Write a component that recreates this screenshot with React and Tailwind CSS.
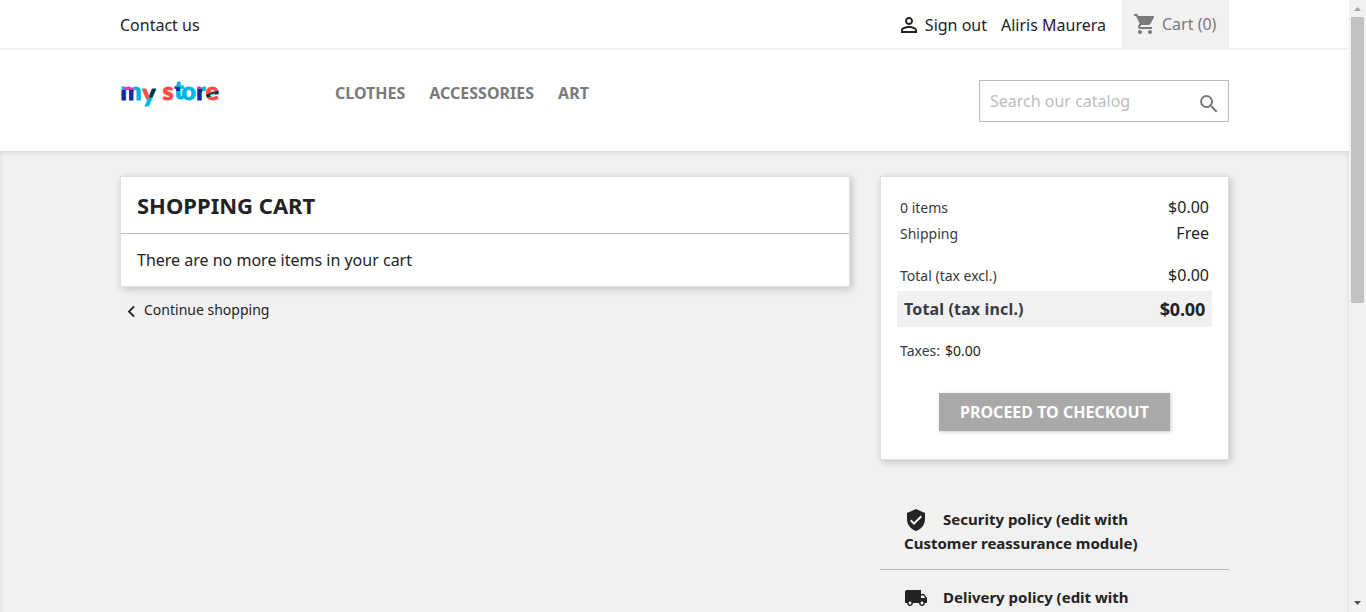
import React from "react";
import {
  MdPersonOutline,
  MdShoppingCart,
  MdSearch,
  MdChevronLeft,
  MdVerifiedUser,
  MdLocalShipping,
} from "react-icons/md";

const cardClass =
  "border border-[#dfdfdf] bg-white shadow-[2px_2px_8px_0_rgba(0,0,0,0.2)]";

function Logo() {
  return (
    <svg width="104" height="40" viewBox="0 0 104 40" className="block overflow-visible" role="img" aria-label="my store">
      <defs>
        <pattern id="ink" patternUnits="userSpaceOnUse" width="104" height="40">
          <rect width="104" height="40" fill="#00b5e2" />
          <rect x="1" y="16" width="6" height="12" fill="#0a2896" />
          <rect x="9" y="16" width="5.5" height="12" fill="#0a2896" />
          <rect x="4" y="11" width="9" height="5" fill="#dd35b5" />
          <rect x="22.6" y="8" width="6.9" height="16.5" fill="#ff4a47" />
          <rect x="29.5" y="8" width="6.5" height="15.5" fill="#05313e" />
          <rect x="40" width="14.5" height="40" fill="#ff4a47" />
          <rect x="55" y="13" width="5" height="4" fill="#0a2896" />
          <rect x="77" y="15" width="5.2" height="14" fill="#0a2896" />
          <rect x="77" y="11" width="4.5" height="4" fill="#dd35b5" />
          <rect x="86" width="18" height="40" fill="#ff4a47" />
          <path d="M86 20.5 L100 16 L100 19.5 L86 24 Z" fill="#05313e" />
          <path d="M90 21 L95 19 L95 21 L90 23 Z" fill="#00b5e2" />
        </pattern>
      </defs>
      <text
        x="0.6 22.2 35 42.4 54.2 61.6 76.2 85.6"
        y="25.8 27.6 26.2 26.2 25 26.4 26.4 26.4"
        fill="url(#ink)"
        stroke="url(#ink)"
        strokeWidth="0.9"
        strokeLinejoin="round"
        className="font-['Lato',sans-serif] text-[25px] font-black"
      >
        my store
      </text>
    </svg>
  );
}

function TopBar() {
  return (
    <div className="h-[50px] border-b-2 border-[#f1f1f1]">
      <div className="mx-auto flex h-12 w-[1109px] items-center justify-between text-[16px] text-[#232323]">
        <a className="pt-0.5">Contact us</a>
        <div className="flex h-full items-center">
          <MdPersonOutline className="mt-0.5 mr-1 size-6" />
          <a className="mr-3.5 pt-0.5">Sign out</a>
          <a className="mr-4 pt-0.5">Aliris Maurera</a>
          <div className="flex h-full w-[107px] items-center bg-[#f1f1f1] pl-[11px] text-[#7a7a7a]">
            <MdShoppingCart className="mr-[5px] size-6" />
            <span>Cart (0)</span>
          </div>
        </div>
      </div>
    </div>
  );
}

function Navigation() {
  return (
    <div className="mx-auto flex h-[101px] w-[1109px] items-start">
      <div className="w-[215px] pt-6">
        <Logo />
      </div>
      <nav className="flex gap-6 pt-[31px] text-[16px] leading-6 font-bold text-[#7a7a7a]">
        <a>CLOTHES</a>
        <a>ACCESSORIES</a>
        <a>ART</a>
      </nav>
      <div className="mt-[30px] ml-auto flex h-[42px] w-[250px] items-center justify-between border border-[#bdbdbd] pr-[7px] pl-2.5 text-[16px]">
        <span className="text-[#bdbdbd]">Search our catalog</span>
        <MdSearch className="mt-1.5 size-6 text-[#7a7a7a]" />
      </div>
    </div>
  );
}

function CartPanel() {
  return (
    <div className="w-[730px]">
      <div className={`${cardClass} h-[111px]`}>
        <h1 className="flex h-[57px] items-center border-b border-[#bdbdbd] pl-4 text-[22px] font-bold text-[#232323]">
          SHOPPING CART
        </h1>
        <p className="flex h-[52px] items-center pl-4 text-[16px] text-[#232323]">
          There are no more items in your cart
        </p>
      </div>
      <a className="mt-3 flex h-5 items-center text-[14px] text-[#232323]">
        <MdChevronLeft className="mt-1 size-[23px]" />
        <span className="ml-px">Continue shopping</span>
      </a>
    </div>
  );
}

function Row({ label, value }) {
  return (
    <div className="flex h-[26px] items-center justify-between px-[19px]">
      <span className="pt-px text-[14px] text-[#363a42]">{label}</span>
      <span className="text-[16px] text-[#232323]">{value}</span>
    </div>
  );
}

function Summary() {
  return (
    <div className={`${cardClass} h-[284px] pt-[17px]`}>
      <Row label="0 items" value="$0.00" />
      <Row label="Shipping" value="Free" />
      <div className="mt-4">
        <Row label="Total (tax excl.)" value="$0.00" />
      </div>
      <div className="mx-4 mt-[3px] flex h-9 items-center justify-between bg-[#f1f1f1] px-[7px] font-bold">
        <span className="text-[16px] tracking-[0.15px] text-[#363a42]">Total (tax incl.)</span>
        <span className="text-[18px] tracking-[-0.2px] text-[#232323]">$0.00</span>
      </div>
      <div className="mt-[13px] flex h-5 items-center px-[19px] text-[14px]">
        <span className="mr-[5px] text-[#363a42]">Taxes:</span>
        <span className="text-[#232323]">$0.00</span>
      </div>
      <button className="mx-auto mt-[33px] flex h-[38px] w-[231px] items-center justify-center bg-[#a9a9a9] text-[16px] font-bold whitespace-nowrap text-white shadow-[1px_1px_4px_0_rgba(0,0,0,0.2)]">
        PROCEED TO CHECKOUT
      </button>
    </div>
  );
}

function Policy({ icon: Icon, title }) {
  return (
    <li className="h-[78px] border-b border-[#b5b5b5] px-6 pt-[15px] text-[15px] leading-6 font-bold text-[#232323]">
      <div className="flex h-6 items-center">
        <Icon className="mt-0.5 mr-[15px] size-6" />
        <span>{title[0]}</span>
      </div>
      <div>{title[1]}</div>
    </li>
  );
}

function ScrollBar() {
  return (
    <div className="flex h-full w-[17px] flex-col items-center justify-between bg-[#f1f1f1]">
      <div className="flex flex-col items-center">
        <svg width="17" height="17" className="block">
          <path d="M5 11h7L8.5 7z" fill="#a3a3a3" />
        </svg>
        <div className="h-[286px] w-[13px] bg-[#c1c1c1]" />
      </div>
      <svg width="17" height="17" className="block">
        <path d="M5 6h7L8.5 10z" fill="#505050" />
      </svg>
    </div>
  );
}

export default function App() {
  return (
    <div className="flex h-[612px] w-[1366px] overflow-hidden font-['Noto_Sans',sans-serif]">
      <div className="flex w-[1349px] flex-col overflow-hidden">
        <header className="h-[151px] shrink-0 bg-white">
          <TopBar />
          <Navigation />
        </header>
        <main className="h-[900px] shrink-0 bg-[#f1f1f1] pt-[25px] shadow-[inset_0_2px_5px_0_rgba(0,0,0,0.11)]">
          <div className="mx-auto flex w-[1109px] justify-between">
            <CartPanel />
            <aside className="w-[349px]">
              <Summary />
              <ul className="mt-8">
                <Policy icon={MdVerifiedUser} title={["Security policy (edit with", "Customer reassurance module)"]} />
                <Policy icon={MdLocalShipping} title={["Delivery policy (edit with", ""]} />
              </ul>
            </aside>
          </div>
        </main>
      </div>
      <ScrollBar />
    </div>
  );
}
